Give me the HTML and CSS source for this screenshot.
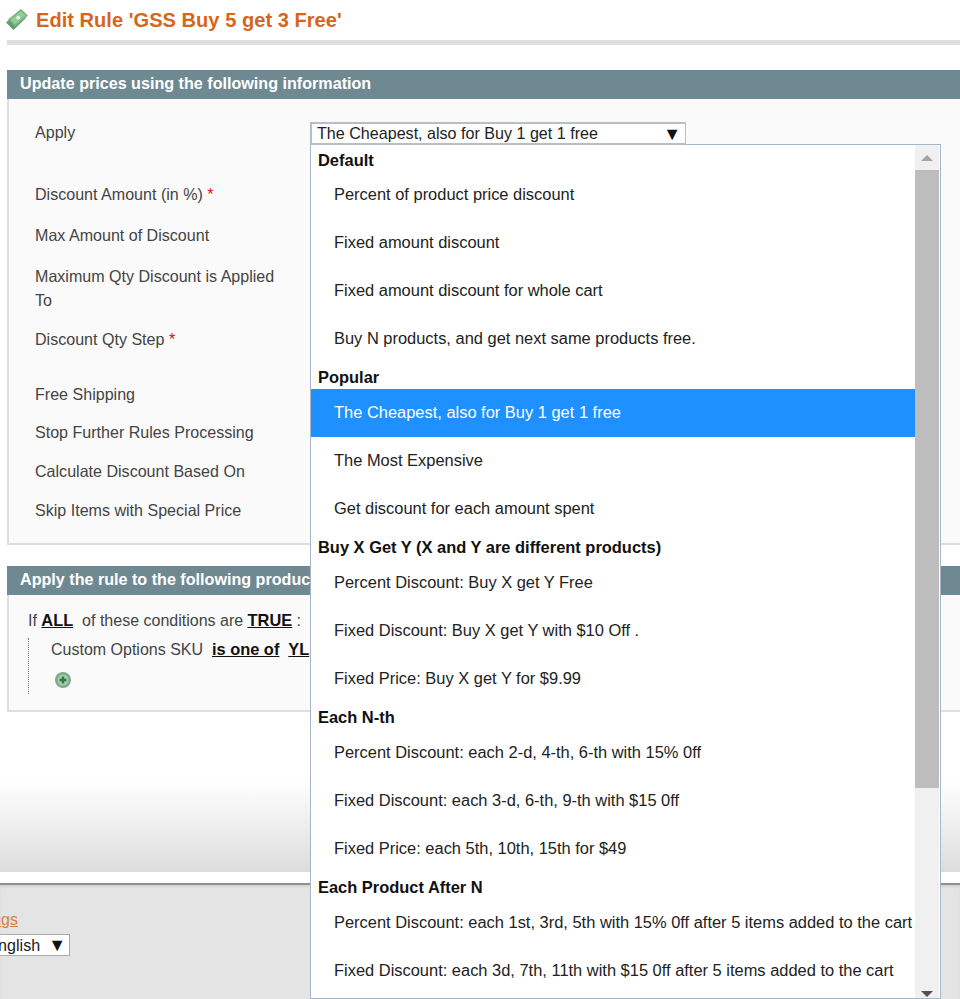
FILE: index.html
```html
<!DOCTYPE html>
<html lang="en">
<head>
<meta charset="utf-8">
<title>Edit Rule</title>
<link rel="stylesheet" href="styles.css">
</head>
<body>
<div class="page">
  <main class="main">
    <div class="page-head">
      <svg class="head-icon" width="22" height="22" viewBox="0 0 22 22">
        <path d="M0 13.5 L13 2.5 L20 9 L7.5 21 Z" fill="#5f9c70"/>
        <path d="M2 10.5 L15 0 L22 6.5 L9 18 Z" fill="#74b384"/>
        <path d="M4.5 10.5 L15 2 L19.5 6.5 L9 15.5 Z" fill="#93cc9a"/>
        <circle cx="12.2" cy="8.8" r="2" fill="#dff0dc"/>
      </svg>
      <h1 class="page-title">Edit Rule 'GSS Buy 5 get 3 Free'</h1>
    </div>

    <section class="section section-prices">
      <h2 class="section-title">Update prices using the following information</h2>
      <div class="panel panel-prices">
        <div class="row row-apply">Apply</div>
        <div class="row row-amount">Discount Amount (in %) <span class="req">*</span></div>
        <div class="row row-max">Max Amount of Discount</div>
        <div class="row row-qty">Maximum Qty Discount is Applied To</div>
        <div class="row row-step">Discount Qty Step <span class="req">*</span></div>
        <div class="row row-ship">Free Shipping</div>
        <div class="row row-stop">Stop Further Rules Processing</div>
        <div class="row row-plain">Calculate Discount Based On</div>
        <div class="row row-plain">Skip Items with Special Price</div>
      </div>
    </section>

    <section class="section section-rule">
      <h2 class="section-title">Apply the rule to the following products</h2>
      <div class="panel panel-rule">
        <div class="cond-head">If <a class="cond-link">ALL</a>&nbsp; of these conditions are <a class="cond-link">TRUE</a> :</div>
        <div class="cond-tree">
          <div class="cond-line">Custom Options SKU &nbsp;<a class="cond-link">is one of</a>&nbsp; <a class="cond-link">YL</a></div>
          <svg class="cond-add" width="18" height="18" viewBox="0 0 18 18">
            <circle cx="9" cy="9" r="8" fill="#7fa98b"/>
            <circle cx="9" cy="9" r="5.5" fill="#a5cda9"/>
            <path d="M9 5.5 V12.5 M5.5 9 H12.5" stroke="#2f7a45" stroke-width="2.4"/>
          </svg>
        </div>
      </div>
    </section>

    <div class="fade"></div>
  </main>

  <footer class="footer">
    <div class="footer-col">
      <a class="footer-link">Help Us Keep Magento Healthy - Report All Bugs</a>
      <div class="locale"><span class="locale-text">English</span><span class="arrow">▼</span></div>
    </div>
  </footer>
</div>

<div class="select"><span>The Cheapest, also for Buy 1 get 1 free</span><span class="arrow">▼</span></div>

<div class="dropdown">
  <div class="list">
    <div class="group">Default</div>
    <div class="opt">Percent of product price discount</div>
    <div class="opt">Fixed amount discount</div>
    <div class="opt">Fixed amount discount for whole cart</div>
    <div class="opt">Buy N products, and get next same products free.</div>
    <div class="group">Popular</div>
    <div class="opt opt-active">The Cheapest, also for Buy 1 get 1 free</div>
    <div class="opt">The Most Expensive</div>
    <div class="opt">Get discount for each amount spent</div>
    <div class="group">Buy X Get Y (X and Y are different products)</div>
    <div class="opt">Percent Discount: Buy X get Y Free</div>
    <div class="opt">Fixed Discount: Buy X get Y with $10 Off .</div>
    <div class="opt">Fixed Price: Buy X get Y for $9.99</div>
    <div class="group">Each N-th</div>
    <div class="opt">Percent Discount: each 2-d, 4-th, 6-th with 15% 0ff</div>
    <div class="opt">Fixed Discount: each 3-d, 6-th, 9-th with $15 0ff</div>
    <div class="opt">Fixed Price: each 5th, 10th, 15th for $49</div>
    <div class="group">Each Product After N</div>
    <div class="opt">Percent Discount: each 1st, 3rd, 5th with 15% 0ff after 5 items added to the cart</div>
    <div class="opt">Fixed Discount: each 3d, 7th, 11th with $15 0ff after 5 items added to the cart</div>
  </div>
  <div class="scrollbar">
    <div class="sb-btn"><span class="tri-up"></span></div>
    <div class="sb-track"><div class="sb-thumb"></div></div>
    <div class="sb-end"><span class="tri-down"></span></div>
  </div>
</div>
</body>
</html>
```
FILE: styles.css
```css
* { box-sizing: border-box; }
html, body { margin: 0; height: 999px; overflow: hidden; }
body { background: #fff; font-family: "Liberation Sans", Arial, sans-serif; font-size: 16px; color: #333; position: relative; }
.page { display: flex; flex-direction: column; height: 999px; }
.main { height: 883px; flex: none; padding-left: 7px; display: flex; flex-direction: column; }
.page-head { height: 45px; display: flex; align-items: flex-start; border-bottom: 5px solid #dedede; padding-top: 9px; flex: none; }
.head-icon { margin-left: -1px; flex: none; }
.page-title { margin: 0 0 0 8px; font-size: 20.13px; line-height: 22px; font-weight: 700; color: #d6661b; white-space: nowrap; }
.section { flex: none; }
.section-prices { margin-top: 25px; }
.section-rule { margin-top: 21px; }
.section-title { margin: 0; height: 29px; line-height: 26px; background: #6f8992; color: #fff; font-size: 16.14px; font-weight: 700; padding-left: 13px; white-space: nowrap; overflow: hidden; }
.panel { background: #fafafa; border: 2px solid #dedede; border-top: 0; border-right: 0; }
.panel-prices { height: 446px; padding: 21px 0 0 26px; }
.panel-rule { height: 117px; padding: 14px 0 0 19px; }
.row { width: 250px; line-height: 24px; color: #444; font-size: 16.07px; }
.row-amount { margin-top: 38px; }
.row-max { margin-top: 17px; }
.row-qty { margin-top: 17px; }
.row-step { margin-top: 15px; }
.row-ship { margin-top: 31px; }
.row-stop { margin-top: 14px; }
.row-plain { margin-top: 15px; }
.req { color: #c4201a; }
.cond-head { line-height: 24px; color: #444; }
.cond-link { color: #111; font-size: 16.4px; line-height: 1; font-weight: 700; text-decoration: underline; }
.cond-tree { margin: 5px 0 0 0; border-left: 1px dotted #777; height: 56px; padding-left: 22px; }
.cond-line { line-height: 24px; color: #444; white-space: nowrap; }
.cond-add { display: block; margin: 9px 0 0 3px; }
.fade { margin-top: 67px; flex: 1; margin-left: -7px; border-bottom: 11px solid #fff; background: linear-gradient(#fff, #dcdcdc); }
.footer { flex: 1; background: #e4e4e4; border-top: 2px solid #8f8f8f; box-shadow: inset 0 2px 2px #d4d4d4; padding-top: 25px; }
.footer-col { width: 70px; display: flex; flex-direction: column; align-items: flex-end; }
.footer-link { color: #dc7f3c; text-decoration: underline; white-space: nowrap; width: 18px; display: flex; justify-content: flex-end; margin-right: 52px; line-height: 20px; }
.locale { margin-top: 4px; height: 22px; width: 70px; flex: none; border: 1px solid #aaa; border-left: 0; background: #fff; color: #222; display: flex; align-items: center; justify-content: flex-end; padding-right: 3px; overflow: hidden; }
.locale-text { margin-right: 8px; white-space: nowrap; font-size: 16.1px; }
.arrow { font-size: 18px; line-height: 18px; color: #111; }
.select { position: absolute; left: 310px; top: 122px; width: 376px; height: 23px; background: #fff; border: 2px solid #b6bfc8; border-right-width: 1px; display: flex; justify-content: space-between; align-items: center; padding: 0 4px 0 5px; color: #222; font-size: 16.1px; z-index: 2; }
.dropdown { position: absolute; left: 310px; top: 144px; width: 631px; height: 855px; background: #fff; border: 1px solid #a4b6c8; display: flex; overflow: hidden; z-index: 1; }
.list { width: 604px; flex: none; color: #222; font-size: 16.44px; }
.group { height: 26px; line-height: 28px; padding-left: 7px; font-weight: 700; color: #111; white-space: nowrap; }
.group:first-child { line-height: 30px; }
.opt { height: 48px; line-height: 46px; padding-left: 23px; white-space: nowrap; }
.opt-active { background: #1e90ff; color: #fff; }
.scrollbar { width: 24px; flex: none; background: #f0f0f0; display: flex; flex-direction: column; }
.sb-btn { height: 25px; display: flex; align-items: center; justify-content: center; flex: none; }
.sb-track { flex: 1; }
.sb-thumb { height: 618px; background: #bdbdbd; }
.sb-end { height: 14px; flex: none; display: flex; justify-content: center; align-items: flex-end; }
.tri-up { border: 6px solid transparent; border-top: 0; border-bottom: 6px solid #a3a3a3; }
.tri-down { border: 6px solid transparent; border-bottom: 0; border-top: 6px solid #505050; margin-bottom: 1px; }
```
